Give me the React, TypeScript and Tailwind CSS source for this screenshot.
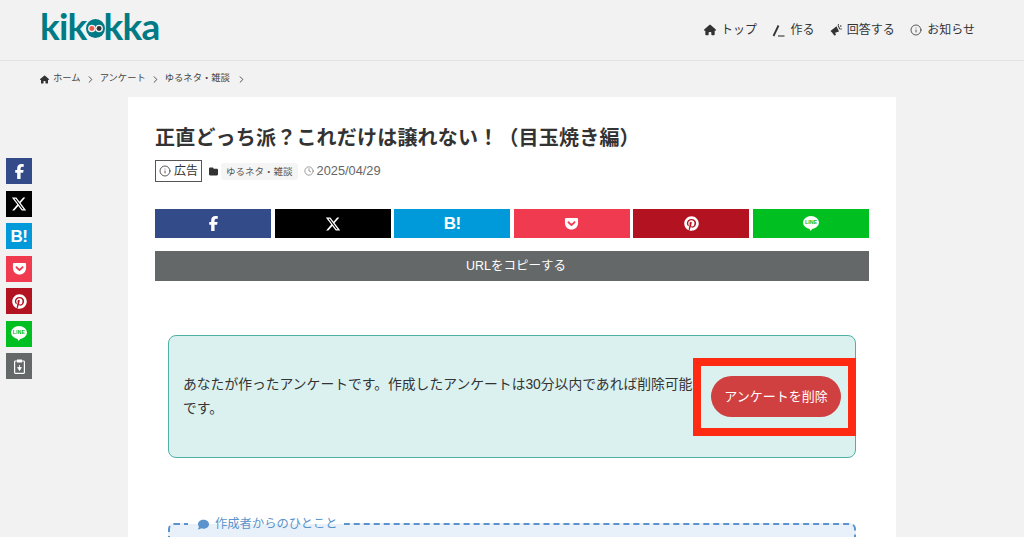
import { Clock, Info } from 'lucide-react';
import { FaComment, FaFacebookF, FaFolder, FaGetPocket, FaHouse, FaPinterest, FaXTwitter } from 'react-icons/fa6';
import { LuChevronRight } from 'react-icons/lu';

const font = 'font-["Liberation_Sans","Noto_Sans_CJK_JP",sans-serif]';

function HatenaIcon() {
  return <span className="text-[17px] font-bold leading-none tracking-[-0.5px] font-['Liberation_Sans',sans-serif]">B!</span>;
}

function LineIcon() {
  return (
    <svg width="16" height="15" viewBox="0 0 16 15">
      <ellipse cx="8" cy="6.5" rx="8" ry="6.5" fill="white" />
      <path d="M6 12h4l-2.4 3z" fill="white" />
      <text x="8" y="8.4" textAnchor="middle" fontSize="5.2" fontWeight="700" fill="#00c021" fontFamily="Liberation Sans">LINE</text>
    </svg>
  );
}

function ClipboardIcon() {
  return (
    <svg width="11" height="15" viewBox="0 0 11 15" fill="none">
      <rect x="0.6" y="2" width="9.8" height="12.4" rx="0.8" stroke="white" strokeWidth="1.2" />
      <rect x="3" y="0.5" width="5" height="3" fill="white" />
      <path d="M5.5 6v3M3.6 8.5 5.5 11.5l1.9-3z" fill="white" stroke="white" strokeWidth="0.8" />
    </svg>
  );
}

function PenIcon() {
  return (
    <svg width="13" height="13" viewBox="0 0 13 13" fill="none">
      <path d="M1.5 12 6.5 1.5" stroke="#333" strokeWidth="1.8" />
      <path d="M6 12h6.5" stroke="#333" strokeWidth="1.1" />
    </svg>
  );
}

// horn opening to the upper right, with small sparks
function MegaphoneIcon() {
  return (
    <svg width="12" height="12" viewBox="0 0 12 12" fill="#333">
      <path d="M0.5 7 6.5 2.2 9 7.6 3 9.4z" />
      <path d="M2.6 9.2 5 8.6 6 11l-1.8.6z" />
      <path d="M7.6 1.5 8.4 1l1.8 4-.8.4z" />
      <circle cx="10.8" cy="2" r="0.8" />
      <circle cx="11" cy="5" r="0.7" />
      <circle cx="8.4" cy="0.6" r="0.6" />
    </svg>
  );
}

function Logo() {
  return (
    <div className="flex items-center text-[37px] font-bold leading-none tracking-[-0.8px] text-[#007b85] font-['Lato',sans-serif]">
      <span>kik</span>
      <svg width="19" height="19" viewBox="0 0 21 21" className="mx-[-1px] mt-[6px] shrink-0">
        <ellipse cx="10.5" cy="10.5" rx="10.5" ry="10.5" fill="#007b85" />
        <circle cx="6.5" cy="10.5" r="4.2" fill="#f2f2f2" />
        <circle cx="14.5" cy="10.5" r="4.2" fill="#f2f2f2" />
        <circle cx="6.5" cy="10.5" r="2.7" fill="#f0564a" />
        <circle cx="14.5" cy="10.5" r="2.7" fill="#333" />
      </svg>
      <span>kka</span>
    </div>
  );
}

const navItems = [
  { icon: <FaHouse size={12} />, label: 'トップ' },
  { icon: <PenIcon />, label: '作る' },
  { icon: <MegaphoneIcon />, label: '回答する' },
  { icon: <Info size={12} strokeWidth={1.6} />, label: 'お知らせ' },
];

const shares = [
  { bg: 'bg-[#344b8a]', icon: <FaFacebookF size={15} /> },
  { bg: 'bg-black', icon: <FaXTwitter size={16} /> },
  { bg: 'bg-[#0099d9]', icon: <HatenaIcon /> },
  { bg: 'bg-[#ef3a50]', icon: <FaGetPocket size={15} /> },
  { bg: 'bg-[#b31220]', icon: <FaPinterest size={15} /> },
  { bg: 'bg-[#00c021]', icon: <LineIcon /> },
];

export default function App() {
  return (
    <div className={`relative h-[537px] overflow-hidden bg-[#f2f2f2] text-[#333] ${font}`}>
      <header className="flex h-[61px] items-center justify-between border-b border-[#e2e2e2] pl-[40px] pr-[49px]">
        <div className="-mt-[10px]">
          <Logo />
        </div>
        <nav className="flex items-center gap-[15.4px] text-[12px]">
          {navItems.map((item) => (
            <div key={item.label} className="flex items-center gap-[5px]">
              {item.icon}
              <span>{item.label}</span>
            </div>
          ))}
        </nav>
      </header>

      <div className="flex h-[36px] items-center gap-[4px] pl-[40px] text-[9.3px] text-[#444]">
        <FaHouse size={9} className="text-[#333]" />
        <span>ホーム</span>
        <LuChevronRight size={11} />
        <span>アンケート</span>
        <LuChevronRight size={11} />
        <span>ゆるネタ・雑談</span>
        <LuChevronRight size={11} className="ml-[2px]" />
      </div>

      <aside className="fixed left-[6px] top-[158px] flex flex-col gap-[6.5px]">
        {shares.map((s, i) => (
          <div key={i} className={`flex h-[26px] w-[26px] items-center justify-center text-white ${s.bg}`}>
            {s.icon}
          </div>
        ))}
        <div className="flex h-[26px] w-[26px] items-center justify-center bg-[#656868]">
          <ClipboardIcon />
        </div>
      </aside>

      <main className="ml-[128px] h-[500px] w-[768px] bg-white px-[27px] pt-[26px]">
        <h1 className="text-[20px] font-bold leading-[30px] tracking-[0.2px] text-[#333]">
          正直どっち派？これだけは譲れない！（目玉焼き編）
        </h1>

        <div className="mt-[7px] flex h-[22px] items-center text-[12.8px] text-[#666]">
          <div className="flex h-[22px] items-center gap-[3px] border border-[#555] px-[3px] text-[12px] text-[#333]">
            <Info size={12} strokeWidth={1.6} />
            <span>広告</span>
          </div>
          <FaFolder size={9} className="ml-[7px] text-[#333]" />
          <span className="ml-[3px] rounded-[3px] bg-[#f5f5f5] px-[5px] py-[2px] text-[9.5px] leading-[13px] text-[#555]">
            ゆるネタ・雑談
          </span>
          <Clock size={10} strokeWidth={1.5} className="ml-[6px]" />
          <span className="ml-[3px]">2025/04/29</span>
        </div>

        <div className="mt-[27px] grid grid-cols-6 gap-[3.3px]">
          {shares.map((s, i) => (
            <div key={i} className={`flex h-[29px] items-center justify-center text-white ${s.bg}`}>
              {s.icon}
            </div>
          ))}
        </div>

        <div className="mt-[13px] flex h-[30px] items-center justify-center bg-[#656868] pl-[8px] text-[12.5px] text-white">
          URLをコピーする
        </div>

        <div className="relative mx-[13px] mt-[54px] flex h-[123px] items-center rounded-[8px] border border-[#4fb0a8] bg-[#daf1ef] pl-[14px] pr-[14px]">
          <p className="w-[511px] text-[13.8px] leading-[24px] text-[#333]">
            あなたが作ったアンケートです。作成したアンケートは30分以内であれば削除可能です。
          </p>
          <button className="ml-auto flex h-[41px] w-[130px] items-center justify-center rounded-full bg-[#d04040] text-[13px] text-white">
            アンケートを削除
          </button>
          <div className="absolute right-[-1px] top-[22px] h-[78px] w-[163px] border-[8px] border-[#ff2a12]" />
        </div>

        <div className="relative mx-[13px] mt-[65px] h-[60px] rounded-[6px] border-2 border-dashed border-[#5b93cc] bg-[#e8f1f9]">
          <div className="absolute left-[18px] top-[-10px] flex items-center gap-[6px] bg-[linear-gradient(white_50%,#e8f1f9_50%)] pl-[10px] pr-[6px] text-[12.3px] leading-[18px] text-[#5b93cc]">
            <FaComment size={11} />
            <span>作成者からのひとこと</span>
          </div>
        </div>
      </main>
    </div>
  );
}
